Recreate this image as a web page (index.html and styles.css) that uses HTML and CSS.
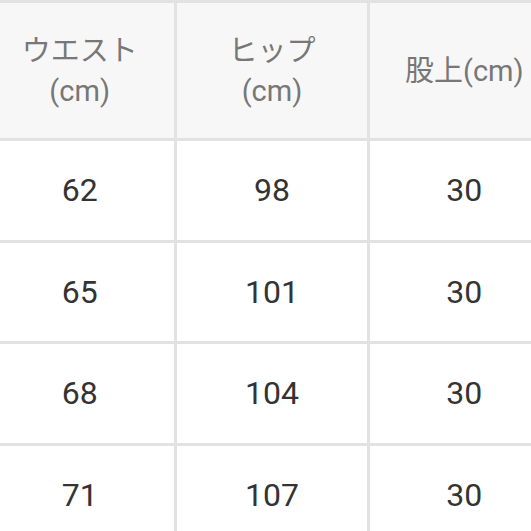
FILE: index.html
```html
<!DOCTYPE html>
<html lang="ja">
<head>
<meta charset="utf-8">
<link rel="stylesheet" href="styles.css">
</head>
<body>
<div class="wrap">
<table class="size-table">
  <thead>
    <tr>
      <th>ウエスト<br>(cm)</th>
      <th>ヒップ<br>(cm)</th>
      <th>股上(cm)</th>
    </tr>
  </thead>
  <tbody>
    <tr><td>62</td><td>98</td><td>30</td></tr>
    <tr><td>65</td><td>101</td><td>30</td></tr>
    <tr><td>68</td><td>104</td><td>30</td></tr>
    <tr><td>71</td><td>107</td><td>30</td></tr>
  </tbody>
</table>
</div>
</body>
</html>
```
FILE: styles.css
```css
html, body {
  margin: 0;
  padding: 0;
  background: #ffffff;
}
.wrap {
  width: 531px;
  height: 531px;
  overflow: hidden;
}
.size-table {
  border-collapse: collapse;
  margin-left: -18px;
  margin-top: 0;
  table-layout: fixed;
  width: 580px;
  font-family: "Roboto", "Noto Sans CJK JP", sans-serif;
}
.size-table th,
.size-table td {
  border: 3px solid #e2e2e2;
  text-align: center;
  vertical-align: middle;
  padding: 0;
}
.size-table th {
  background: #f7f7f7;
  color: #777777;
  font-weight: 400;
  font-size: 29px;
  line-height: 40px;
  height: 135px;
}
.size-table td {
  color: #333333;
  font-size: 32px;
  height: 98.5px;
}
```
